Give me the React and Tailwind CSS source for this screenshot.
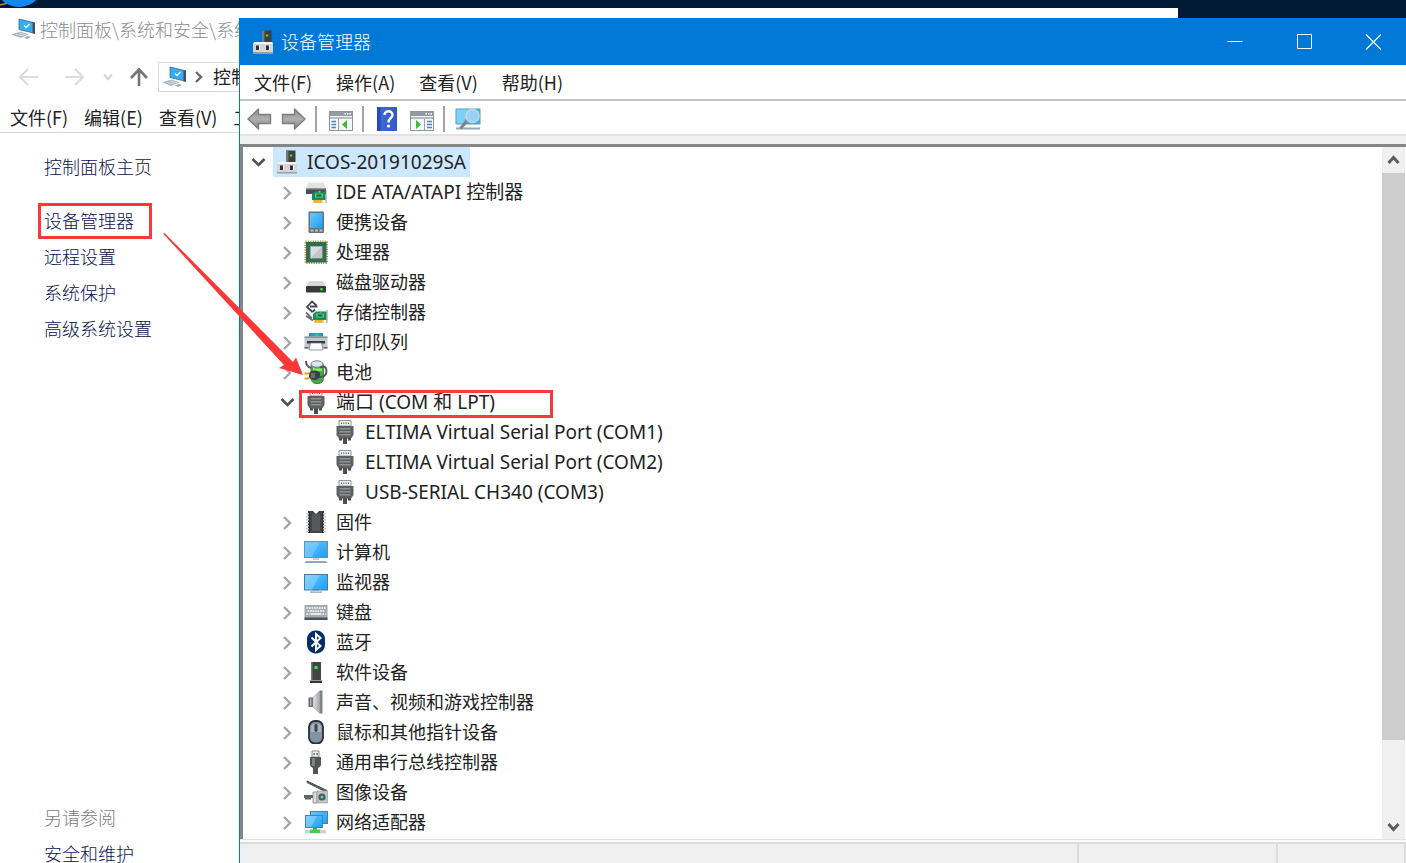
const BLUE = "url(#screen)";

function Defs() {
  return (
    <svg width="0" height="0" className="absolute" aria-hidden="true">
      <defs>
        <linearGradient id="screen" x1="0" y1="0" x2="1" y2="1">
          <stop offset="0" stopColor="#6cc8ff" />
          <stop offset="1" stopColor="#18a0f5" />
        </linearGradient>
        <linearGradient id="metal" x1="0" y1="0" x2="1" y2="0">
          <stop offset="0" stopColor="#e4e4e4" />
          <stop offset="1" stopColor="#a4a6a8" />
        </linearGradient>
        <linearGradient id="arrowFill" x1="0" y1="0" x2="0" y2="1">
          <stop offset="0" stopColor="#8a8a8a" />
          <stop offset="0.5" stopColor="#b0b0b0" />
          <stop offset="1" stopColor="#858585" />
        </linearGradient>
        <linearGradient id="helpFill" x1="0" y1="0" x2="1" y2="0">
          <stop offset="0" stopColor="#1f3fae" />
          <stop offset="0.2" stopColor="#3f66d8" />
          <stop offset="1" stopColor="#3458cc" />
        </linearGradient>
      </defs>
    </svg>
  );
}

function Svg({ children, className = "h-6 w-6" }) {
  return (
    <svg viewBox="0 0 24 24" className={className + " shrink-0"} aria-hidden="true">
      {children}
    </svg>
  );
}

const Card = () => (
  <g>
    <path d="M8 12 11 9.500h10.500V18H8z" fill="#1c8a5a" />
    <path d="M11 11.500h8v4h-8z" fill="#5fbf90" />
    <path d="M12.500 12.500h5v2h-5z" fill="#17623f" />
    <path d="M9.500 18h9v2.800h-9z" fill="#f0a818" />
    <path d="M12.500 18v2.600M15 18v2.600M17.500 18v2.600" stroke="#fbd36a" strokeWidth=".6" />
    <path d="M22 8v13" stroke="#8d9296" strokeWidth="1" />
    <circle cx="15.500" cy="9.800" r="1" fill="#45e04f" />
  </g>
);

const icons = {
  computerRoot: (
    <Svg>
      <rect x="11" y="0.500" width="9.500" height="14" fill="#3c3e40" />
      <path d="M11 .5h2.500v14H11z" fill="#77797b" />
      <circle cx="16" cy="5.500" r="1.200" fill="#35e03c" />
      <path d="M3.500 12H21l1 2v9.500H2V14z" fill="#d3d5d8" />
      <path d="M3.500 12H21l1 2H2z" fill="#f2f3f4" />
      <path d="M2 22h20v1.500H2z" fill="#9da1a6" />
      <path d="M5 15.500h3V20H5zM15 15.500h3V20h-3z" fill="#2f3133" />
      <path d="M8 15.500h1V20H8zM18 15.500h1V20h-1z" fill="#fafafa" />
    </Svg>
  ),
  ide: (
    <Svg>
      <path d="M4.500 2.500h15l2.500 6H2z" fill="#dfe1e3" />
      <path d="M2 8.500h20v5.500H2z" fill="#4a4d50" />
      <path d="M2 8.500h20v1H2z" fill="#8b8f93" />
      <g transform="translate(0 2)"><Card /></g>
    </Svg>
  ),
  portable: (
    <Svg>
      <rect x="4.500" y="1.500" width="15.500" height="21.500" rx="1" fill="#66717b" />
      <rect x="6" y="3" width="12.500" height="15" fill={BLUE} />
      <path d="M6.500 19.500h3v2h-3zM11 19.500h3v2h-3zM15.500 19.500h3v2h-3z" fill="#b9c1c7" />
    </Svg>
  ),
  cpu: (
    <Svg>
      <rect x="1.500" y="1.500" width="21.500" height="21.500" fill="none" stroke="#b98d36" strokeWidth="2" strokeDasharray="1.2 1.2" />
      <rect x="2" y="2" width="20.500" height="20.500" fill="#2f6e50" />
      <rect x="6.500" y="6.500" width="11.500" height="11.500" fill="#dcdedd" stroke="#a8b3ac" />
      <path d="M7 17.500 17.500 7v10.500z" fill="#c4c6c6" />
    </Svg>
  ),
  disk: (
    <Svg>
      <path d="M5.500 11h13l3.500 6H2z" fill="#d5d7d9" />
      <rect x="2" y="16" width="20" height="6.500" rx="1" fill="#37393b" />
      <circle cx="17.500" cy="19.200" r="1.300" fill="#3ee24a" />
    </Svg>
  ),
  storage: (
    <Svg>
      <g fill="none" stroke="#44484b" strokeWidth="1.800">
        <path d="M12.500 5.500 8 1.500 3 7l5.500 5M6 6.500h7.500M8.500 12l2.500-2.500" />
        <path d="M2 12.500l6 6M2 16l7 4.500" stroke="#6b6f72" />
      </g>
      <g transform="translate(1 2)"><Card /></g>
    </Svg>
  ),
  printer: (
    <Svg>
      <path d="M5 3h14v5H5z" fill="#4f7f98" />
      <path d="M7 3.500h10v4H7z" fill="#1f9ff2" />
      <path d="M11 3.500h3.500v4H11z" fill="#38c95c" />
      <path d="M.5 6.500h23v12H.5z" fill="#c2c7ca" />
      <path d="M.5 6.500h23V8H.5z" fill="#8b949b" />
      <path d="M3 11h18v2.500H3z" fill="#34383b" />
      <path d="M6.500 13h11l1.500 7H5z" fill="#fff" stroke="#77808a" strokeWidth=".8" />
      <path d="M.5 17h4v1.500h-4zM19.500 17h4v1.500h-4z" fill="#5d656b" />
    </Svg>
  ),
  battery: (
    <Svg>
      <rect x="7" y="1.500" width="12.500" height="22" rx="5" fill="#3cab41" stroke="#5b7960" />
      <ellipse cx="13" cy="4" rx="6" ry="3.200" fill="#dfe3f6" stroke="#7d8894" />
      <path d="M9 7c2 2 7 2 9 0v4H9z" fill="#8ee874" />
      <path d="M2 1c0 4 2 6 5 7M16 8c4-3 6.500-1 6.500 3s-2 6-6.500 6" fill="none" stroke="#505558" strokeWidth="1.900" />
      <path d="M5 13c2-2 4-2.500 7-2.500l4 2v5l-4 2.500c-3 0-5-.5-7-2.500z" fill="#3f4244" />
      <path d="M7 13h4v5H7z" fill="#6c7073" />
      <path d="M.5 13.500h5M.5 18.500h5" stroke="#d9a61c" strokeWidth="2" />
    </Svg>
  ),
  port: (
    <Svg>
      <path d="M6 .5h12V6H6z" fill="#eceded" stroke="#94989b" />
      <path d="M8 2.500h1v1.500H8zM10.300 2.500h1v1.500h-1zM12.700 2.500h1v1.500h-1zM15 2.500h1v1.500h-1z" fill="#606366" />
      <path d="M3.500 6h17v9l-2.500 3.500H6L3.500 15z" fill="#5d5f61" />
      <path d="M6.500 8h11v1.500h-11zM6.500 11h11v1.500h-11zM6.500 14h11v1.500h-11z" fill="#909294" />
      <path d="M6 18h3v2.500H6zM15 18h3v2.500h-3zM10 18h4v6h-4z" fill="#4b4d4f" />
    </Svg>
  ),
  firmware: (
    <Svg>
      <path d="M4 1h5l3 3 3-3h5v22H4z" fill="#434547" />
      <path d="M8 4h8v17H8z" fill="#56585a" />
      <path d="M3.500 3v19M20.500 3v19" stroke="#c4c7c9" strokeWidth="3" strokeDasharray="1.500 1.500" />
      <path d="M5.500 2v21M18.500 2v21" stroke="#292b2c" />
    </Svg>
  ),
  computer: (
    <Svg>
      <rect x=".5" y="1.500" width="23" height="16" fill={BLUE} stroke="#6991ad" />
      <path d="M1 2h15L8 17H1z" fill="#8fd7ff" opacity=".45" />
      <path d="M9 18h6v2H9z" fill="#c1d0da" />
      <path d="M2 21h20l1.500 2H.5z" fill="#8fa7b8" />
    </Svg>
  ),
  monitor: (
    <Svg>
      <rect x=".5" y="4.500" width="23" height="15.500" fill={BLUE} stroke="#52788f" />
      <path d="M1 5h15L8 19.500H1z" fill="#a5dfff" opacity=".45" />
      <path d="M9 20h6v1H9zM6 21.500h12v1.200H6z" fill="#8fa1ad" />
    </Svg>
  ),
  keyboard: (
    <Svg>
      <path d="M.5 5h23v15H.5z" fill="#a4abb1" />
      <path d="M.5 17.500h23V20H.5z" fill="#4b535a" />
      <path d="M2.500 8h19M3.500 11h17M2.500 14h3M18.500 14h3" stroke="#fff" strokeWidth="1.500" strokeDasharray="1.700 .8" />
      <path d="M6.500 14h11" stroke="#fff" strokeWidth="1.500" />
    </Svg>
  ),
  bluetooth: (
    <Svg>
      <rect x="3" y="0.500" width="18" height="23" rx="8.500" fill="#052e66" />
      <path d="m7.500 7.500 9 8.500-4.500 4V4l4.500 4-9 8.500" fill="none" stroke="#fff" strokeWidth="2" />
    </Svg>
  ),
  software: (
    <Svg>
      <path d="M7 2h10v18H7z" fill="#414345" />
      <path d="M7 2h1.500v18H7z" fill="#77797b" />
      <path d="M6 20.500h12V23H6z" fill="#333536" />
      <rect x="10.500" y="6" width="3" height="3" fill="#37ee43" />
    </Svg>
  ),
  sound: (
    <Svg>
      <path d="M4.500 7.500H9v9.500H4.500z" fill="#60676d" />
      <path d="m9 7.500 7-7v23l-7-6.500z" fill="url(#metal)" stroke="#9ba0a4" strokeWidth=".6" />
      <path d="M16 .5h2.500v23H16z" fill="#7b858d" />
      <path d="M6 8.500h1.500V16H6z" fill="#aab2b8" />
    </Svg>
  ),
  mouse: (
    <Svg>
      <rect x="5" y="1" width="14" height="22.500" rx="6" fill="#8293a3" stroke="#2b3035" strokeWidth="1.800" />
      <path d="M7 6c1-3 9-3 10 0v6H7z" fill="#a8b4c0" />
      <rect x="10.500" y="4" width="3" height="8" rx="1.400" fill="#3c4249" />
    </Svg>
  ),
  usb: (
    <Svg>
      <path d="M8 1h7v6H8z" fill="#eff0f0" stroke="#8b8e90" />
      <path d="M9.500 3h1.300v2H9.500zM12.500 3h1.300v2h-1.300z" fill="#55585a" />
      <path d="M6 7h11v7.500c0 2-2 3-3 3.500v6H9v-6c-1-.5-3-1.500-3-3.500z" fill="#515355" />
      <path d="M8 8h3v8H8z" fill="#818385" />
    </Svg>
  ),
  imaging: (
    <Svg>
      <path d="m3 1 20 9.500-1 1.500L3 2.500z" fill="#606467" stroke="#484c4f" />
      <path d="M0 15h9v3H0zM1 18h6v1.500H1z" fill="#60666a" />
      <path d="M9 12h4v11H9z" fill="#dadcdd" stroke="#787d81" strokeWidth=".7" />
      <path d="M13 11h10.500v12H13z" fill="#c2c5c8" stroke="#989da1" strokeWidth=".7" />
      <circle cx="18" cy="17" r="3.600" fill="#4d565d" />
      <circle cx="18" cy="17" r="1.500" fill="#5bd0c4" />
    </Svg>
  ),
  network: (
    <Svg>
      <rect x="6.500" y="1.500" width="17" height="12" fill={BLUE} stroke="#4383ad" />
      <rect x="1.500" y="5.500" width="17" height="12" fill={BLUE} stroke="#4383ad" />
      <path d="M2 6h11L7 17H2z" fill="#a5dfff" opacity=".45" />
      <path d="M9 18h4v2H9z" fill="#36b54b" />
      <path d="M1 20h21v3.500H1z" fill="#cfd1d1" />
      <path d="M6 19.500h10V23H6z" fill="#4cc95a" />
    </Svg>
  ),
};

function PcIcon() {
  return (
    <Svg>
      <path d="m7 2 14.500 3.500V16L7 12.500z" fill="#32aef5" stroke="#3d6a88" strokeWidth=".8" />
      <path d="M20.500 5 23 5.500v11.500l-2.500-.7z" fill="#42515b" />
      <path d="m12 8.500 2 2 3.500-3.500" fill="none" stroke="#fff" strokeWidth="1.500" />
      <path d="m.5 17.500 8-2.500 7 2.500-7 3z" fill="#aab8c2" stroke="#91a1ac" strokeWidth=".6" />
      <path d="m4 17.500 8 1.500M7 16l7 1.800" stroke="#e6ecf0" strokeWidth=".7" />
      <path d="m12 20.500 4-1.500 3 1-4 2z" fill="#9aa9b4" />
    </Svg>
  );
}

function Chevron({ open }) {
  return open ? (
    <svg viewBox="0 0 16 16" className="h-4 w-4" fill="none" stroke="#505050" strokeWidth="2.600" aria-hidden="true">
      <path d="m2.500 5 6 6 6-6" />
    </svg>
  ) : (
    <svg viewBox="0 0 16 16" className="h-4 w-4" fill="none" stroke="#a6a6a6" strokeWidth="2.400" aria-hidden="true">
      <path d="m5 3 6 6-6 6" />
    </svg>
  );
}

const devices = [
  { icon: "ide", name: "IDE ATA/ATAPI 控制器", latin: true },
  { icon: "portable", name: "便携设备" },
  { icon: "cpu", name: "处理器" },
  { icon: "disk", name: "磁盘驱动器" },
  { icon: "storage", name: "存储控制器" },
  { icon: "printer", name: "打印队列" },
  { icon: "battery", name: "电池" },
  {
    icon: "port",
    name: "端口 (COM 和 LPT)",
    marked: true,
    latin: true,
    children: [
      "ELTIMA Virtual Serial Port (COM1)",
      "ELTIMA Virtual Serial Port (COM2)",
      "USB-SERIAL CH340 (COM3)",
    ],
  },
  { icon: "firmware", name: "固件" },
  { icon: "computer", name: "计算机" },
  { icon: "monitor", name: "监视器" },
  { icon: "keyboard", name: "键盘" },
  { icon: "bluetooth", name: "蓝牙" },
  { icon: "software", name: "软件设备" },
  { icon: "sound", name: "声音、视频和游戏控制器" },
  { icon: "mouse", name: "鼠标和其他指针设备" },
  { icon: "usb", name: "通用串行总线控制器" },
  { icon: "imaging", name: "图像设备" },
  { icon: "network", name: "网络适配器" },
];

function Row({ icon, name, open, leaf, latin, selected, marked }) {
  return (
    <div className="relative flex h-[30px] items-center">
      {leaf ? (
        <span className="w-[30px]" />
      ) : (
        <button type="button" aria-label={(open ? "折叠 " : "展开 ") + name} className="flex w-[30px] justify-center">
          <Chevron open={open} />
        </button>
      )}
      <span className={"flex h-full items-center gap-2 pl-0.5 pr-1 whitespace-nowrap " + (selected ? "bg-[#cce8ff]" : "")}>
        {icons[icon]}
        <span className={latin ? "text-[19px]" : "text-[18px]"}>{name}</span>
      </span>
      {marked && <span className="absolute -bottom-px left-[27px] h-7 w-[254px] border-[3px] border-[#fb3737]" />}
    </div>
  );
}

function DeviceTree() {
  return (
    <ul className="min-w-0 flex-1 overflow-hidden font-['Noto_Sans','Noto_Sans_CJK_SC',sans-serif] font-normal text-[#222]">
      <li>
        <Row icon="computerRoot" name="ICOS-20191029SA" open selected latin />
        <ul className="pl-[29px]">
          {devices.map((d) => (
            <li key={d.name}>
              <Row icon={d.icon} name={d.name} latin={d.latin} open={Boolean(d.children)} marked={d.marked} />
              {d.children && (
                <ul className="pl-[29px]">
                  {d.children.map((c) => (
                    <li key={c}>
                      <Row icon="port" name={c} leaf latin />
                    </li>
                  ))}
                </ul>
              )}
            </li>
          ))}
        </ul>
      </li>
    </ul>
  );
}

function Scrollbar() {
  return (
    <div className="mr-px flex w-[23px] shrink-0 flex-col bg-[#f0f0f0]">
      <button type="button" aria-label="向上滚动" className="flex h-[26px] items-center justify-center">
        <svg viewBox="0 0 14 14" className="h-3.5 w-3.5" fill="none" stroke="#5c5c5c" strokeWidth="3"><path d="m1.500 10 5-5.500 5 5.500" /></svg>
      </button>
      <div className="flex min-h-0 flex-1 flex-col">
        <div className="grow-[567] bg-[#cdcdcd]" />
        <div className="grow-[73]" />
      </div>
      <button type="button" aria-label="向下滚动" className="flex h-[26px] items-center justify-center">
        <svg viewBox="0 0 14 14" className="h-3.5 w-3.5" fill="none" stroke="#5c5c5c" strokeWidth="3"><path d="m1.500 5 5 5.500 5-5.500" /></svg>
      </button>
    </div>
  );
}

function PanelIcon({ right }) {
  return (
    <svg viewBox="0 -4 24 24" className="h-6 w-6" aria-hidden="true">
      <rect x=".5" y=".5" width="23" height="19" fill="#f5f6f7" stroke="#8e979f" />
      <path d="M1 1h22v4H1z" fill="#929ba4" />
      <path d="M15.500 2h1.500v1.500h-1.500zM18 2h1.500v1.500H18zM20.500 2H22v1.500h-1.500z" fill="#fff" />
      <path d="M1 7h22" stroke="#b4bbc1" strokeWidth="2" />
      {right ? (
        <g>
          <path d="M14.500 8v11" stroke="#9aa2a9" />
          <path d="M17 10.500h5M17 13.500h5M17 16.500h5" stroke="#4a86c5" strokeWidth="1.400" />
          <path d="m6 9 5 4.500L6 18z" fill="#3db837" />
        </g>
      ) : (
        <g>
          <path d="M9.500 8v11" stroke="#9aa2a9" />
          <path d="M2.500 10.500H7M2.500 13.500H7M2.500 16.500H7" stroke="#4a86c5" strokeWidth="1.400" />
          <path d="M18 9v9l-5-4.500z" fill="#3db837" />
        </g>
      )}
    </svg>
  );
}

function ToolArrow({ label, d }) {
  return (
    <button type="button" aria-label={label}>
      <svg viewBox="0 0 26 24" className="h-6 w-[26px]" aria-hidden="true">
        <path d={d} fill="url(#arrowFill)" stroke="#7d7d7d" strokeWidth="1.400" strokeLinejoin="round" />
      </svg>
    </button>
  );
}

function Divider() {
  return <span className="h-[26px] w-0.5 bg-[#a3a3a3]" />;
}

function Toolbar() {
  return (
    <div className="flex h-[33px] items-center gap-[9px] pb-px pl-1.5 pt-1">
      <div className="flex items-center gap-2">
        <ToolArrow label="后退" d="M2 12 12.500 2v5.500H24.500v9H12.500V22z" />
        <ToolArrow label="前进" d="M25 12 14.500 2v5.500H2.500v9h12V22z" />
      </div>
      <div className="flex items-center gap-3">
        <Divider />
        <button type="button" aria-label="显示/隐藏控制台树"><PanelIcon /></button>
      </div>
      <div className="flex items-center gap-[13px]">
        <Divider />
        <button type="button" aria-label="帮助">
          <svg viewBox="0 0 20 24" className="h-6 w-5" aria-hidden="true">
            <rect width="20" height="24" fill="url(#helpFill)" />
            <path d="M3 0v24" stroke="#2745a8" />
            <path d="M7.500 8c0-5 8-5 8 0 0 3-4 3-4 7.500" fill="none" stroke="#fff" strokeWidth="2.400" />
            <circle cx="11.500" cy="19" r="1.600" fill="#fff" />
          </svg>
        </button>
        <button type="button" aria-label="显示操作窗格"><PanelIcon right /></button>
      </div>
      <div className="flex items-center gap-2.5">
        <Divider />
        <button type="button" aria-label="扫描检测硬件改动">
          <svg viewBox="0 0 26 24" className="h-6 w-[26px]" aria-hidden="true">
            <rect x="1" y="2" width="24" height="15" fill="#3db1ea" stroke="#5a9cc0" />
            <path d="M1.500 2.500h14L8 16.500H1.500z" fill="#7dd0f6" />
            <path d="M1 21.500h24" stroke="#8fa9ba" strokeWidth="2" />
            <path d="m12.500 13.500-7 8" stroke="#7d868d" strokeWidth="3" />
            <circle cx="17.500" cy="9" r="6.500" fill="#a9dcf5" fillOpacity=".8" stroke="#c8d4dc" strokeWidth="1.600" />
          </svg>
        </button>
      </div>
    </div>
  );
}

function DeviceManager() {
  return (
    <section className="absolute bottom-0 left-[239px] right-0 top-[18px] flex flex-col border-l border-[#0078d7] bg-white">
      <header className="flex h-[47px] shrink-0 items-center bg-[#0078d7] text-white">
        <span className="ml-[11px] flex">{icons.computerRoot}</span>
        <h1 className="ml-1.5 flex-1 text-[18px]">设备管理器</h1>
        <button type="button" aria-label="最小化" className="flex h-full w-[70px] items-center justify-center">
          <svg viewBox="0 0 16 16" className="h-4 w-4" stroke="#fff" fill="none"><path d="M.5 7.500h15" /></svg>
        </button>
        <button type="button" aria-label="最大化" className="flex h-full w-[70px] items-center justify-center">
          <svg viewBox="0 0 16 16" className="h-4 w-4" stroke="#fff" fill="none"><path d="M.5.5h14v14H.5z" /></svg>
        </button>
        <button type="button" aria-label="关闭" className="flex h-full w-[66px] items-center justify-center">
          <svg viewBox="0 0 16 16" className="h-4 w-4" stroke="#fff" strokeWidth="1.200" fill="none"><path d="m1 .5 15 15m0-15-15 15" /></svg>
        </button>
      </header>
      <nav className="flex h-9 shrink-0 items-center gap-6 border-b-2 border-[#c4c4c4] pl-3.5 text-[18px] font-normal text-[#222]">
        {["文件(F)", "操作(A)", "查看(V)", "帮助(H)"].map((m) => (
          <button type="button" key={m}>{m}</button>
        ))}
      </nav>
      <Toolbar />
      <div className="h-2.5 shrink-0 border-t-2 border-[#e2e2e2] bg-[#f0f0f0]" />
      <div className="flex min-h-0 flex-1 border-l-[3px] border-t-[3px] border-[#868686]">
        <DeviceTree />
        <Scrollbar />
      </div>
      <footer className="flex h-6 shrink-0 flex-col border-t border-[#e0e0e0] bg-[#fafafa] pt-0.5">
        <div className="flex flex-1 border-t-2 border-[#dcdcdc] bg-[#f0f0f0]">
          <span className="flex-1 border-r-2 border-[#dcdcdc]" />
          <span className="w-[199px] border-r-2 border-[#dcdcdc]" />
          <span className="w-32 border-r-2 border-[#dcdcdc]" />
        </div>
      </footer>
    </section>
  );
}

function NavArrow({ label, d, color, wide }) {
  return (
    <button type="button" aria-label={label}>
      <svg viewBox="0 0 22 22" className="h-[22px] w-[22px]" fill="none" stroke={color} strokeWidth={wide ? 2.6 : 2.2} aria-hidden="true">
        <path d={d} />
      </svg>
    </button>
  );
}

function ControlPanel() {
  return (
    <section className="mr-[228px] flex flex-1 flex-col bg-white text-[18px]">
      <div className="flex w-[239px] flex-1 flex-col overflow-hidden">
        <header className="flex h-[42px] items-center gap-1 pl-3 text-[#8c8c8c]">
          <PcIcon />
          <h2 className="whitespace-nowrap">控制面板\系统和安全\系统</h2>
        </header>
        <div className="flex h-[54px] items-center pl-[18px]">
          <div className="flex items-center gap-6">
            <NavArrow label="后退" color="#dcdcdc" d="M20 11H2M10 3l-8 8 8 8" />
            <NavArrow label="前进" color="#dcdcdc" d="M1 11h18M11 3l8 8-8 8" />
          </div>
          <button type="button" aria-label="最近的位置" className="ml-4">
            <svg viewBox="0 0 12 12" className="h-3 w-3" fill="none" stroke="#d4d4d4" strokeWidth="2.200"><path d="m2 3.500 4 4.500 4-4.500" /></svg>
          </button>
          <span className="ml-3.5 flex">
            <NavArrow label="上移" wide color="#777" d="M11 20V4M3 12l8-8.500 8 8.500" />
          </span>
          <div className="ml-2 flex h-[30px] min-w-0 flex-1 items-center border border-r-0 border-[#d9d9d9] pl-1">
            <PcIcon />
            <svg viewBox="0 0 12 12" className="ml-1.5 h-3 w-3 shrink-0" fill="none" stroke="#6a6a6a" strokeWidth="2.400" aria-hidden="true"><path d="m3 1 5 5-5 5" /></svg>
            <span className="ml-2 min-w-0 flex-1 overflow-hidden whitespace-nowrap pb-0.5 font-normal text-[#222]">控制面板</span>
          </div>
        </div>
        <nav className="flex h-[29px] items-center gap-4 overflow-hidden whitespace-nowrap border-b border-[#dadada] pb-0.5 pl-2.5 font-normal text-[#222]">
          {["文件(F)", "编辑(E)", "查看(V)", "工具(T)"].map((m) => (
            <button type="button" key={m} className="shrink-0">{m}</button>
          ))}
        </nav>
        <aside className="flex flex-1 flex-col items-start pl-11 pt-[15px] text-[#0a1150]">
          <a href="#home" className="leading-9">控制面板主页</a>
          <nav className="mt-[18px] flex flex-col items-start leading-9">
            <a href="#devices" className="relative">
              设备管理器
              <span className="absolute -bottom-px -left-1.5 h-9 w-[114px] border-[3px] border-[#fb3737]" />
            </a>
            <a href="#remote">远程设置</a>
            <a href="#protection">系统保护</a>
            <a href="#advanced">高级系统设置</a>
          </nav>
          <div className="-mb-2 mt-auto flex flex-col leading-9">
            <span className="text-[#7c7c7c]">另请参阅</span>
            <a href="#security">安全和维护</a>
          </div>
        </aside>
      </div>
    </section>
  );
}

export default function App() {
  return (
    <main className="relative flex h-screen flex-col overflow-hidden bg-[#001a35] font-['Noto_Sans_CJK_SC',sans-serif] font-light">
      <Defs />
      <svg viewBox="0 0 60 8" className="h-2 w-[60px] shrink-0" aria-hidden="true">
        <path d="M0 5 8 3" stroke="#c58a2a" strokeWidth="1.500" />
        <circle cx="19" cy="-18" r="25" fill="#1488f0" />
      </svg>
      <ControlPanel />
      <DeviceManager />
      <svg viewBox="0 0 142 146" className="pointer-events-none absolute left-[162px] top-[231px] h-[146px] w-[142px]" aria-hidden="true">
        <path d="M1 2.500 2.500 2 131 131 134 126.500 141 144 117 137 122 134z" fill="#fb3737" />
      </svg>
    </main>
  );
}
